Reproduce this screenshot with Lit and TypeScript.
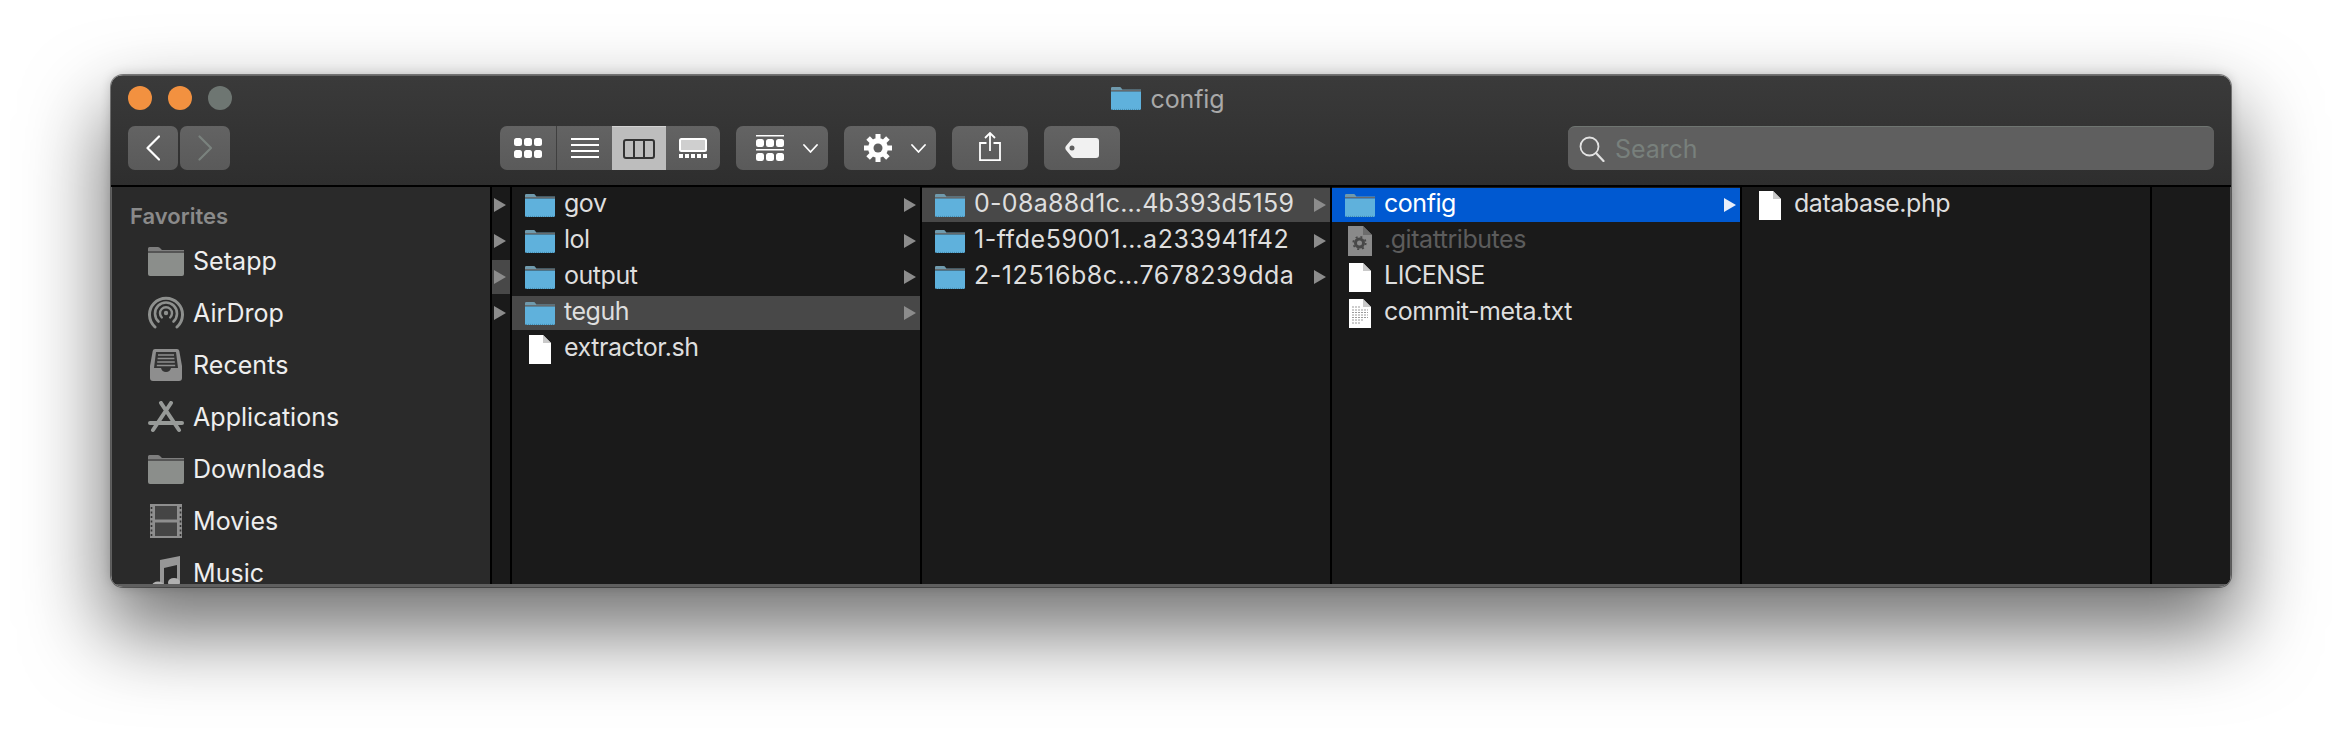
import { LitElement, html, css, svg } from "lit";
import { customElement } from "lit/decorators.js";

const folder = (c: string, tab: string, line: string, w = 30, h = 23) => html`<svg class="ic" width=${w} height=${h} viewBox="0 0 30 23">
  <path d="M0 3V1.2Q0 0 1.2 0H8.500Q9.800 0 10.600 1.400L11.400 2.600H30V4H0Z" fill=${tab}/>
  <path d="M0 3H30V4.400H0Z" fill=${line}/>
  <path d="M0 4.400H30V21.400Q30 23 28.400 23H1.600Q0 23 0 21.400Z" fill=${c}/>
  <path d="M1 22.400H29" stroke="#3d7fa0" stroke-width=".8" stroke-dasharray="1 1"/>
</svg>`;
const blueFolder = folder("#5fb1dc", "#6f9aad", "#666b6e");
const doc = (fill = "#fff", extra: unknown = "") => html`<svg class="ic" width="22" height="29" viewBox="0 0 22 29">
  <path d="M0 0H14L22 8V29H0Z" fill=${fill}/><path d="M14 0L22 8H14Z" fill="#c9c9c9"/>${extra}
</svg>`;
const textLines = svg`<g stroke="#9a9a9a" stroke-width="1" stroke-dasharray="2 1"><path d="M3 8H12M3 11H19M3 13.500H19M3 16H19M3 18.500H19M3 21H15M3 24H12"/></g>`;
const gearDoc = html`<svg class="ic" width="24" height="30" viewBox="0 0 24 30">
  <path d="M0 0H15L24 9V30H0Z" fill="#8a8a8a"/><path d="M15 0L24 9H15Z" fill="#6c6c6c"/>
  <circle cx="11.500" cy="17" r="4" fill="none" stroke="#484848" stroke-width="3"/>
  <circle cx="11.500" cy="17" r="6.200" fill="none" stroke="#484848" stroke-width="1.800" stroke-dasharray="2 2.900"/>
</svg>`;

const sideIcons: Record<string, unknown> = {
  folder: html`<svg width="36" height="29" viewBox="0 0 36 29">
    <path d="M0 4V1.500Q0 0 1.500 0H10Q11.500 0 12.500 1.500L14 3H36V5H0Z" fill="#7e7e7e"/>
    <path d="M0 4H36V6H0Z" fill="#555"/>
    <path d="M0 6H36V27Q36 29 34 29H2Q0 29 0 27Z" fill="#8b8e8b"/></svg>`,
  airdrop: html`<svg width="36" height="36" viewBox="0 0 36 36" fill="none" stroke="#8e908e" stroke-linecap="round">
    <path d="M7 32A16.500 16.500 0 1 1 29 32" stroke-width="3"/>
    <path d="M10.500 26.500A11 11 0 1 1 25.500 26.500" stroke-width="2.600"/>
    <path d="M13.800 22.500A6 6 0 1 1 22.200 22.500" stroke-width="2.400"/>
    <circle cx="18" cy="18" r="2.200" fill="#8e908e" stroke="none"/></svg>`,
  recents: html`<svg width="32" height="32" viewBox="0 0 32 32">
    <path d="M5 0H27Q29 0 29.300 2L32 17V29Q32 32 29 32H3Q0 32 0 29V17L2.700 2Q3 0 5 0Z" fill="#8e8e8e"/>
    <path d="M6 3H26L28 19H21Q20 23 16 23T11 19H4Z" fill="#333"/>
    <path d="M8 6H24M7.600 9.500H24.400M7.200 13H24.800M6.800 16.500H25.200" stroke="#8e8e8e" stroke-width="1.700"/></svg>`,
  apps: html`<svg width="36" height="32" viewBox="0 0 36 32" fill="none" stroke="#979a98" stroke-linecap="round">
    <path d="M13 2L31 29M23 2L5 29" stroke-width="4"/>
    <path d="M2 22H34" stroke-width="4"/></svg>`,
  movies: html`<svg width="32" height="34" viewBox="0 0 32 34">
    <path d="M0 0H32V34H0Z" fill="#8e8e8e"/>
    <path d="M5 2H27V15.500H5ZM5 18.500H27V32H5Z" fill="#454545"/>
    <path d="M1.500 3V32M30.500 3V32" stroke="#333" stroke-width="1.600" stroke-dasharray="2 2.500"/></svg>`,
  music: html`<svg width="30" height="36" viewBox="0 0 30 36">
    <path d="M9 5L29 1V27H26V10L13 13V31H9Z" fill="#979797"/>
    <ellipse cx="7" cy="31" rx="6" ry="4.500" fill="#b0b0b0"/>
    <ellipse cx="23" cy="27.500" rx="6" ry="4.500" fill="#b0b0b0"/></svg>`,
};

const dots = (y: number) => [0, 1, 2].map((i) => svg`<rect x=${i * 10} y=${y} width="8" height="8" rx="2.500" fill="#fff"/>`);

const toolbar = {
  grid: html`<svg width="28" height="20" viewBox="0 0 28 20">${dots(0)}${dots(12)}</svg>`,
  list: html`<svg width="28" height="20" viewBox="0 0 28 20"><path d="M0 1H28M0 7H28M0 13H28M0 19H28" stroke="#fff" stroke-width="2"/></svg>`,
  cols: html`<svg width="32" height="20" viewBox="0 0 32 20" fill="none" stroke="#333" stroke-width="2"><rect x="1" y="1" width="30" height="18" rx="2"/><path d="M11 1V19M21 1V19"/></svg>`,
  gallery: html`<svg width="28" height="20" viewBox="0 0 28 20"><rect x="1" y="1" width="26" height="12" rx="1.500" fill="#cfcfcf" stroke="#fff" stroke-width="2"/>${[0, 1, 2, 3, 4].map((i) => svg`<rect x=${i * 6} y="16" width="4" height="4" fill="#fff"/>`)}</svg>`,
  group: html`<svg width="28" height="26" viewBox="0 0 28 26"><path d="M0 .75H28M0 14.750H28" stroke="#fff" stroke-width="1.500"/>${dots(4)}${dots(18)}</svg>`,
  chev: html`<svg width="15" height="9" viewBox="0 0 15 9" fill="none"><path d="M1 1L7.500 8L14 1" stroke="#fff" stroke-width="1.800" stroke-linecap="round" stroke-linejoin="round"/></svg>`,
  gear: html`<svg width="28" height="28" viewBox="0 0 28 28"><circle cx="14" cy="14" r="7" fill="none" stroke="#fff" stroke-width="6"/><g stroke="#fff" stroke-width="5">${[0, 45, 90, 135].map((a) => svg`<path d="M14 0V28" transform="rotate(${a} 14 14)"/>`)}</g><circle cx="14" cy="14" r="4.500" fill="#5e5e5e"/></svg>`,
  share: html`<svg width="22" height="29" viewBox="0 0 22 29" fill="none" stroke="#fff" stroke-width="1.800"><path d="M7.500 11H1V28.100H21V11H14.500"/><path d="M11 19V1.500M6 6L11 1L16 6"/></svg>`,
  tag: html`<svg width="34" height="20" viewBox="0 0 34 20"><path fill-rule="evenodd" d="M9 0H31Q34 0 34 3V17Q34 20 31 20H9Q8 20 7 19.200L1 12Q-.4 10 1 8L7 .8Q8 0 9 0ZM7 7.500A2.500 2.500 0 1 0 7 12.500A2.500 2.500 0 1 0 7 7.500Z" fill="#f1f1f1"/></svg>`,
  back: html`<svg width="14" height="26" viewBox="0 0 14 26" fill="none"><path d="M13 1.500L1.500 13L13 24.500" stroke="#fff" stroke-width="2.200" stroke-linecap="round" stroke-linejoin="round"/></svg>`,
  fwd: html`<svg width="14" height="26" viewBox="0 0 14 26" fill="none"><path d="M1.500 1.500L13 13L1.500 24.500" stroke="#7a827e" stroke-width="2.200" stroke-linecap="round" stroke-linejoin="round"/></svg>`,
  search: html`<svg width="26" height="26" viewBox="0 0 26 26" fill="none" stroke="#e2e2e2"><circle cx="10.500" cy="10.500" r="9" stroke-width="1.800"/><path d="M17 17L24.500 25" stroke-width="2.200" stroke-linecap="round"/></svg>`,
};

type Row = { name: string; kind: "folder" | "doc" | "text" | "gear"; arrow?: boolean; state?: "hi" | "sel" | "dim"; track?: string };
const columns: { rows: Row[] }[] = [
  { rows: [
    { name: "gov", kind: "folder", arrow: true },
    { name: "lol", kind: "folder", arrow: true },
    { name: "output", kind: "folder", arrow: true },
    { name: "teguh", kind: "folder", arrow: true, state: "hi" },
    { name: "extractor.sh", kind: "doc" },
  ] },
  { rows: [
    { name: "0-08a88d1c…4b393d5159", kind: "folder", arrow: true, state: "hi", track: "t0" },
    { name: "1-ffde59001…a233941f42", kind: "folder", arrow: true, track: "t1" },
    { name: "2-12516b8c…7678239dda", kind: "folder", arrow: true, track: "t1" },
  ] },
  { rows: [
    { name: "config", kind: "folder", arrow: true, state: "sel" },
    { name: ".gitattributes", kind: "gear", state: "dim" },
    { name: "LICENSE", kind: "doc" },
    { name: "commit-meta.txt", kind: "text" },
  ] },
  { rows: [{ name: "database.php", kind: "doc" }] },
];
const favorites: [string, string][] = [
  ["folder", "Setapp"], ["airdrop", "AirDrop"], ["recents", "Recents"], ["apps", "Applications"],
  ["folder", "Downloads"], ["movies", "Movies"], ["music", "Music"],
];

@customElement("app-root")
export class AppRoot extends LitElement {
  static styles = css`
    :host { display: block; width: 2342px; height: 734px; background: #fff; padding: 75px 111px 0; box-sizing: border-box; overflow: hidden;
      font-family: Inter, "Liberation Sans", sans-serif; font-size: 25px; letter-spacing: -.1px; }
    .window { display: flex; flex-direction: column; height: 512px; border-radius: 12px; overflow: hidden; }
    .frame { border-radius: 12px; box-shadow: 0 40px 80px 6px rgba(0,0,0,.55), 0 0 12px rgba(0,0,0,.2), 0 0 0 1px rgba(0,0,0,.45); }
    .bar { height: 112px; flex: none; box-sizing: border-box; background: linear-gradient(#3a3a3a, #2e2e2e); border-top: 1px solid #666; border-bottom: 2px solid #000; padding: 0 17px; display: flex; flex-direction: column; }
    .top { height: 44px; margin-bottom: 6px; flex: none; display: grid; grid-template-columns: 1fr auto 1fr; align-items: center; }
    .lights { display: flex; gap: 16px; }
    .light { width: 24px; height: 24px; border-radius: 50%; background: #f29140; }
    .light.off { background: #6e7672; }
    .title { display: flex; align-items: center; gap: 9px; color: #a9a9a9; padding-right: 6px; }
    .title span { padding-top: 2px; }
    .tools { display: flex; align-items: center; height: 44px; }
    .btn { height: 44px; border-radius: 7px; background: linear-gradient(#636363, #5a5a5a); display: flex; align-items: center; justify-content: center; box-sizing: border-box; flex: none; }
    .nav { display: flex; gap: 2px; width: 102px; flex: none; }
    .nav .btn { width: 50px; }
    .views { display: flex; margin-left: 270px; border-radius: 7px; overflow: hidden; flex: none; }
    .views .btn { border-radius: 0; }
    .v1 { width: 57px; border-right: 1px solid #3f3f3f; }
    .v2 { width: 55px; }
    .v3 { width: 54px; background: #bdbdbd !important; border-top: 1px solid #d2d2d2; }
    .v4 { width: 54px; }
    .group, .action { gap: 19px; margin-left: 16px; width: 92px; justify-content: flex-start; padding-left: 20px; }
    .share, .tag { width: 76px; margin-left: 16px; }
    .share { padding-bottom: 3px; }
    .search { margin-left: auto; width: 646px; background: #5f5f5f; justify-content: flex-start; padding-left: 11px; gap: 10px; border-top: 1px solid #6f7571; color: #78807c; }
    .body { flex: 1; min-height: 0; display: flex; border: solid #5f5f5f; border-width: 0 1px 3px; }
    .side { width: 380px; flex: none; box-sizing: border-box; background: #2a2a2a; padding: 16px 0 0 18px; overflow: hidden; color: #eee; border-right: 2px solid #000; letter-spacing: .05px; }
    .fav { font-size: 22px; font-weight: 600; color: #8a8a8a; height: 26px; line-height: 26px; margin-bottom: 6px; letter-spacing: 0; }
    .item { height: 52px; display: flex; align-items: center; padding-left: 18px; flex: none; }
    .iw { width: 36px; height: 36px; display: flex; align-items: center; justify-content: center; margin-right: 9px; flex: none; }
    .strip { width: 20px; flex: none; box-sizing: border-box; background: #1a1a1a; border-right: 2px solid #000; padding-top: 1px; display: flex; flex-direction: column; gap: 2px; }
    .mini { height: 34px; display: flex; align-items: center; padding-left: 2px; }
    .mini.hi { background: #484848; }
    .col { width: 410px; flex: none; box-sizing: border-box; background: #1a1a1a; border-right: 2px solid #000; padding-top: 1px; display: flex; flex-direction: column; gap: 2px; color: #dedede; }
    .rest { flex: 1; background: #1a1a1a; }
    .row { height: 34px; flex: none; display: flex; align-items: center; }
    .row.hi { background: #484848; }
    .row.sel { background: #0059d1; color: #fff; }
    .row.dim { color: #5c5c5c; }
    .ii { width: 52px; height: 34px; flex: none; display: flex; align-items: center; justify-content: center; box-sizing: border-box; padding-left: 4px; }
    .ic { display: block; }
    .name { flex: 1; white-space: nowrap; padding-bottom: 4px; letter-spacing: -.46px; }
    .name.t0 { letter-spacing: .3px; }
    .name.t1 { letter-spacing: .56px; }
    .arrow { width: 0; height: 0; border-left: 12px solid #8c8c8c; border-top: 7px solid transparent; border-bottom: 7px solid transparent; margin-right: 4px; flex: none; }
    .sel .arrow { border-left-color: #e8eefa; }
    .mini .arrow { margin: 0; }
  `;

  private icon(r: Row) {
    if (r.kind === "folder") return blueFolder;
    if (r.kind === "gear") return gearDoc;
    if (r.kind === "text") return doc("#fff", textLines);
    return doc();
  }

  render() {
    return html`<div class="frame"><div class="window">
      <div class="bar">
        <div class="top">
          <div class="lights"><span class="light"></span><span class="light"></span><span class="light off"></span></div>
          <div class="title">${blueFolder}<span>config</span></div>
          <span></span>
        </div>
        <div class="tools">
          <div class="nav"><div class="btn">${toolbar.back}</div><div class="btn">${toolbar.fwd}</div></div>
          <div class="views">
            <div class="btn v1">${toolbar.grid}</div>
            <div class="btn v2">${toolbar.list}</div>
            <div class="btn v3">${toolbar.cols}</div>
            <div class="btn v4">${toolbar.gallery}</div>
          </div>
          <div class="btn group">${toolbar.group}${toolbar.chev}</div>
          <div class="btn action">${toolbar.gear}${toolbar.chev}</div>
          <div class="btn share">${toolbar.share}</div>
          <div class="btn tag">${toolbar.tag}</div>
          <div class="btn search">${toolbar.search}<span>Search</span></div>
        </div>
      </div>
      <div class="body">
        <div class="side">
          <div class="fav">Favorites</div>
          ${favorites.map(([i, n]) => html`<div class="item"><div class="iw">${sideIcons[i]}</div><span>${n}</span></div>`)}
        </div>
        <div class="strip">
          ${[0, 1, 2, 3].map((i) => html`<div class="mini ${i === 2 ? "hi" : ""}"><span class="arrow"></span></div>`)}
        </div>
        ${columns.map((c) => html`<div class="col">
          ${c.rows.map((r) => html`<div class="row ${r.state ?? ""}">
            <div class="ii">${this.icon(r)}</div>
            <span class="name ${r.track ?? ""}">${r.name}</span>
            ${r.arrow ? html`<span class="arrow"></span>` : ""}
          </div>`)}
        </div>`)}
        <div class="rest"></div>
      </div>
    </div></div>`;
  }
}
